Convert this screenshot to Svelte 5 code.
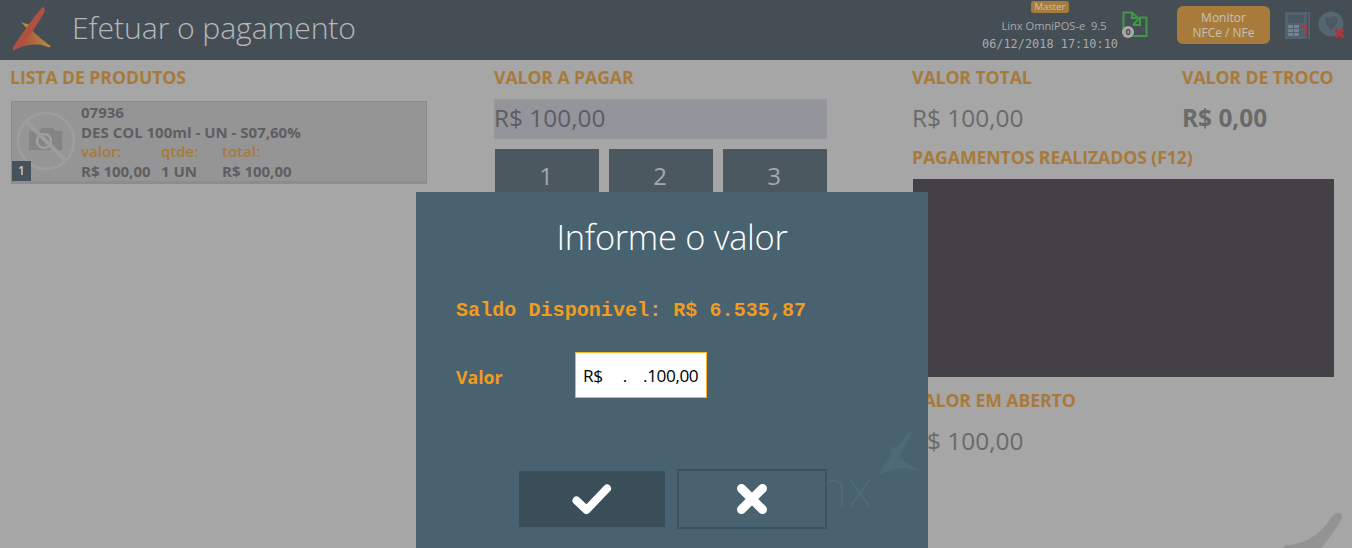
<script>
  const keys = ['1', '2', '3'];
</script>

<div class="page">
  <header class="topbar">
    <svg class="logo" viewBox="0 0 60 50" width="60" height="50" aria-hidden="true">
      <defs>
        <linearGradient id="lg" x1="0" x2="1" y1="0" y2="0">
          <stop offset="0.25" stop-color="#ad5040" />
          <stop offset="1" stop-color="#b8903a" />
        </linearGradient>
      </defs>
      <path fill="#b48f3b" d="M21 18C25 20 31 21 36 21L30 28Z" />
      <path fill="url(#lg)" d="M30 24C37 32 45 38 51 42.500C50 44 48 43 45 42C36 39 24 41 14 46L27 29Z" />
      <path fill="#b05040" d="M42 3.500C45 2.500 45.500 6 44 9C38 20 26 38 15 46C13 47 12 45 13.500 43C20 32 33 14 42 3.500Z" />
    </svg>
    <h1>Efetuar o pagamento</h1>
    <div class="spacer"></div>
    <div class="sysinfo">
      <span class="master">Master</span>
      <span class="version">Linx OmniPOS-e&nbsp; 9.5</span>
      <span class="clock">06/12/2018 17:10:10</span>
    </div>
    <svg class="docs" viewBox="0 0 30 30" width="30" height="30" aria-hidden="true">
      <path fill="none" stroke="#3f9a45" stroke-width="2" d="M1.500 25V3.500H10L16 9M10 3.500V9H15" />
      <path fill="none" stroke="#3f9a45" stroke-width="2" d="M11 16L18 8.500H24.500V27H10M18 8.500V16H11" />
      <circle cx="6" cy="23" r="6" fill="#a9a9a9" />
      <text x="6" y="26" text-anchor="middle" class="docs-n">0</text>
    </svg>
    <button class="monitor">Monitor<br />NFCe / NFe</button>
    <svg class="pos" viewBox="0 0 28 30" width="28" height="30" aria-hidden="true">
      <rect x="1" y="1" width="22" height="27" fill="#53626c" />
      <rect x="24" y="1" width="2" height="27" fill="#53626c" />
      <rect x="4" y="4" width="16" height="8" fill="#4a5861" />
      <path fill="#6d8595" d="M4 14h5v3H4zM10 14h5v3h-5zM4 18h5v3H4zM10 18h5v3h-5zM4 22h5v3H4zM10 22h5v3h-5z" />
      <rect x="15.500" y="15.500" width="7" height="9" fill="none" stroke="#a5383a" />
    </svg>
    <svg class="globe" viewBox="0 0 28 30" width="28" height="30" aria-hidden="true">
      <circle cx="13" cy="13" r="12.500" fill="#566670" />
      <path fill="#4b5962" d="M7 7C10 5 12 8 14 6C16 4 20 6 20 9C20 13 15 16 13 20C11 16 6 12 7 7Z" />
      <path stroke="#a5383a" stroke-width="3.200" d="M17.500 18.500L25.500 26.500M25.500 18.500L17.500 26.500" />
    </svg>
  </header>

  <main class="content">
    <section class="col products">
      <h2>LISTA DE PRODUTOS</h2>
      <article class="card">
        <div class="thumb">
          <svg viewBox="0 0 62 62" width="62" height="62" aria-hidden="true">
            <circle cx="31" cy="31" r="28" fill="none" stroke="#9d9d9d" stroke-width="3" />
            <path fill="#848484" d="M14 21H24L27 18H38L41 21H47V40H14Z" />
            <circle cx="29" cy="31" r="7" fill="none" stroke="#a0a0a0" stroke-width="2.500" />
            <path stroke="#9d9d9d" stroke-width="4" d="M11 11L51 51" />
          </svg>
          <span class="index">1</span>
        </div>
        <div class="details">
          <div>07936</div>
          <div>DES COL 100ml - UN - S07,60%</div>
          <div class="grid-row accent">
            <span>valor:</span><span>qtde:</span><span>total:</span>
          </div>
          <div class="grid-row">
            <span>R$ 100,00</span><span>1 UN</span><span>R$ 100,00</span>
          </div>
        </div>
      </article>
    </section>

    <section class="col pay">
      <h2>VALOR A PAGAR</h2>
      <div class="amount">R$ 100,00</div>
      <div class="keypad">
        {#each keys as key}
          <div class="key">{key}</div>
        {/each}
      </div>
    </section>

    <section class="col totals">
      <div class="totals-top">
        <div class="total-a">
          <h2>VALOR TOTAL</h2>
          <div class="value">R$ 100,00</div>
        </div>
        <div>
          <h2>VALOR DE TROCO</h2>
          <div class="value strong">R$ 0,00</div>
        </div>
      </div>
      <h2 class="paid-title">PAGAMENTOS REALIZADOS (F12)</h2>
      <div class="paid-list"></div>
      <h2 class="open-title">VALOR EM ABERTO</h2>
      <div class="value">R$ 100,00</div>
    </section>
  </main>

  <svg class="corner" viewBox="0 0 80 40" width="80" height="40" aria-hidden="true">
    <path fill="#939393" d="M11 40C12 38 13 37 15 37C30 36 45 30 57 13C61 6 64 5 67 5C70 5 71 9 69 12C63 22 56 32 49 40Z" />
  </svg>

  <div class="dialog">
    <div class="mark" aria-hidden="true">
      <svg viewBox="0 0 60 50" width="60" height="50">
        <path fill="#4f6a77" d="M21 18C25 20 31 21 35 21L30 28C37 33 45 38 51 42.500C50 44 48 43 45 42C36 39 24 41 14 46L27 29Z" />
        <path fill="#4f6a77" d="M42.500 3.500C45 3 45 6 43.500 9C38 20 26 38 15 46C13 47 12 45 13.500 43C20 32 33 14 42.500 3.500Z" />
      </svg>
      <span class="mark-word">nx</span>
    </div>
    <h3>Informe o valor</h3>
    <p class="saldo">Saldo Disponivel: R$ 6.535,87</p>
    <div class="field">
      <span class="field-label">Valor</span>
      <div class="input">R$&nbsp;&nbsp;&nbsp;&nbsp;&nbsp;.&nbsp;&nbsp;&nbsp;&nbsp;.100,00</div>
    </div>
    <div class="actions">
      <button class="btn ok" aria-label="Confirmar">
        <svg viewBox="0 0 40 32" width="40" height="32">
          <path fill="none" stroke="#fff" stroke-width="8" stroke-linecap="round" stroke-linejoin="round" d="M4.500 17.500L14.500 27L35 5.500" />
        </svg>
      </button>
      <button class="btn cancel" aria-label="Cancelar">
        <svg viewBox="0 0 32 32" width="32" height="32">
          <path fill="none" stroke="#fff" stroke-width="9" stroke-linecap="round" d="M5.500 5.500L26.500 26.500M26.500 5.500L5.500 26.500" />
        </svg>
      </button>
    </div>
  </div>
</div>

<style>
  :global(body) {
    margin: 0;
    background: #a6a6a6;
  }
  .page {
    position: relative;
    width: 1352px;
    height: 548px;
    overflow: hidden;
    background: #a6a6a6;
    font-family: "Open Sans", "Noto Sans", sans-serif;
  }
  .topbar {
    display: flex;
    align-items: center;
    height: 60px;
    background: #444e54;
    box-sizing: border-box;
    padding-right: 6px;
  }
  .logo {
    flex: none;
    margin-top: -2px;
    margin-right: 12px;
  }
  h1 {
    margin: -6px 0 0;
    font-size: 30.200px;
    font-weight: 300;
    color: #b5b8ba;
    letter-spacing: -0.1px;
  }
  .spacer {
    flex: 1;
  }
  .sysinfo {
    display: flex;
    flex-direction: column;
    align-items: center;
    align-self: flex-start;
    width: 136px;
    padding-top: 1px;
    color: #a9abad;
  }
  .master {
    background: #a67b3c;
    color: #c6c2ba;
    font-size: 9.500px;
    line-height: 12px;
    padding: 0 4px;
    border-radius: 3px;
  }
  .version {
    font-size: 11.100px;
    line-height: 15px;
    margin: 4.500px 0 0 8px;
  }
  .clock {
    font-family: "DejaVu Sans Mono", monospace;
    font-size: 11.900px;
    line-height: 15px;
    margin-top: 4px;
    white-space: nowrap;
  }
  .docs {
    flex: none;
    margin-left: 4px;
    margin-top: -12px;
  }
  .docs-n {
    font-size: 9px;
    font-weight: 700;
    fill: #3f4649;
    font-family: "Open Sans", sans-serif;
  }
  .monitor {
    flex: none;
    width: 93px;
    height: 38px;
    margin-left: 25px;
    margin-top: -10px;
    padding: 0;
    border: 0;
    border-radius: 6px;
    background: #a87b3b;
    color: #c6c3bb;
    font: 12px/15px "Open Sans", sans-serif;
  }
  .pos {
    flex: none;
    margin-left: 14px;
    margin-top: -8px;
  }
  .globe {
    flex: none;
    margin-left: 6px;
    margin-top: -8px;
  }
  .content {
    display: flex;
    align-items: flex-start;
  }
  .col {
    box-sizing: border-box;
  }
  h2 {
    margin: 0;
    font-size: 17.700px;
    line-height: 22px;
    font-weight: 700;
    color: #a87a3a;
    letter-spacing: -0.1px;
    white-space: nowrap;
  }
  .products {
    width: 494px;
    padding: 6px 0 0 10px;
  }
  .card {
    display: flex;
    box-sizing: border-box;
    width: 416px;
    height: 83px;
    margin: 13px 0 0 1px;
    background: #959595;
    border: 1px solid #8b8b8b;
    border-bottom: 3px solid #8d8d8d;
  }
  .thumb {
    position: relative;
    width: 69px;
    flex: none;
  }
  .thumb svg {
    position: absolute;
    left: 3px;
    top: 8px;
  }
  .index {
    position: absolute;
    left: 0;
    bottom: 0;
    width: 19px;
    height: 20px;
    background: #46535a;
    color: #c5c7c8;
    font-size: 12px;
    font-weight: 600;
    line-height: 20px;
    text-align: center;
  }
  .details {
    padding-top: 1px;
    font-size: 15px;
    line-height: 19.700px;
    font-weight: 700;
    color: #5e5e63;
  }
  .grid-row {
    display: grid;
    grid-template-columns: 80px 61px auto;
  }
  .accent {
    color: #a87a3a;
    font-weight: 600;
  }
  .pay {
    width: 418px;
    padding-top: 6px;
  }
  .amount {
    box-sizing: border-box;
    width: 333px;
    height: 40px;
    margin-top: 11px;
    background: #94959a;
    color: #5c5d62;
    font-size: 24.400px;
    line-height: 38px;
    white-space: nowrap;
  }
  .keypad {
    display: grid;
    grid-template-columns: repeat(3, 104px);
    column-gap: 10px;
    margin: 10px 0 0 1px;
  }
  .key {
    box-sizing: border-box;
    height: 60px;
    padding-right: 2px;
    background: #4c5860;
    color: #a6a8aa;
    font-size: 24px;
    line-height: 54px;
    text-align: center;
  }
  .totals {
    flex: 1;
    padding-top: 6px;
  }
  .totals-top {
    display: flex;
  }
  .total-a {
    width: 270px;
  }
  .value {
    margin-top: 12px;
    font-size: 24.400px;
    line-height: 36px;
    color: #6a6a6a;
    white-space: nowrap;
  }
  .strong {
    font-weight: 700;
  }
  .paid-title {
    margin-top: 10px;
  }
  .paid-list {
    width: 421px;
    height: 198px;
    margin: 11px 0 0 1px;
    background: #434145;
  }
  .open-title {
    margin-top: 12px;
  }
  .corner {
    position: absolute;
    right: 0;
    bottom: 0;
  }
  .dialog {
    position: absolute;
    left: 416px;
    top: 192px;
    width: 512px;
    height: 356px;
    background: #48626f;
    color: #fff;
  }
  .mark {
    position: absolute;
    left: 412px;
    top: 234px;
    width: 100px;
    height: 100px;
  }
  .mark svg {
    position: absolute;
    left: 39px;
    top: 2px;
  }
  .mark-word {
    position: absolute;
    left: -10px;
    top: 38px;
    font-size: 50px;
    font-weight: 300;
    color: #4f6a77;
    line-height: 48px;
  }
  h3 {
    margin: 0;
    padding-top: 23px;
    font-size: 34.400px;
    line-height: 44px;
    font-weight: 300;
    text-align: center;
    color: #fff;
    letter-spacing: -0.3px;
  }
  .saldo {
    margin: 40px 0 0 40px;
    font-family: "Liberation Mono", monospace;
    font-weight: 700;
    font-size: 20px;
    line-height: 24px;
    letter-spacing: 0.07px;
    color: #f19b1f;
    white-space: nowrap;
  }
  .field {
    display: flex;
    align-items: center;
    margin: 29px 0 0 40px;
  }
  .field-label {
    width: 119px;
    margin-top: 4px;
    font-size: 17.700px;
    font-weight: 700;
    color: #f19b1f;
  }
  .input {
    box-sizing: border-box;
    width: 132px;
    height: 46px;
    padding-left: 7px;
    background: #fff;
    border: 1px solid #f5b81f;
    color: #000;
    font-size: 17.200px;
    line-height: 46px;
    letter-spacing: -0.42px;
    white-space: nowrap;
  }
  .actions {
    position: relative;
    display: flex;
    align-items: center;
    gap: 12px;
    margin: 71px 0 0 103px;
  }
  .btn {
    display: flex;
    align-items: center;
    justify-content: center;
    box-sizing: border-box;
    padding: 0;
  }
  .ok {
    width: 146px;
    height: 56px;
    border: 0;
    background: #3a4e5a;
  }
  .cancel {
    width: 150px;
    height: 60px;
    border: 2px solid #3c525f;
    background: #48626f;
  }
</style>
